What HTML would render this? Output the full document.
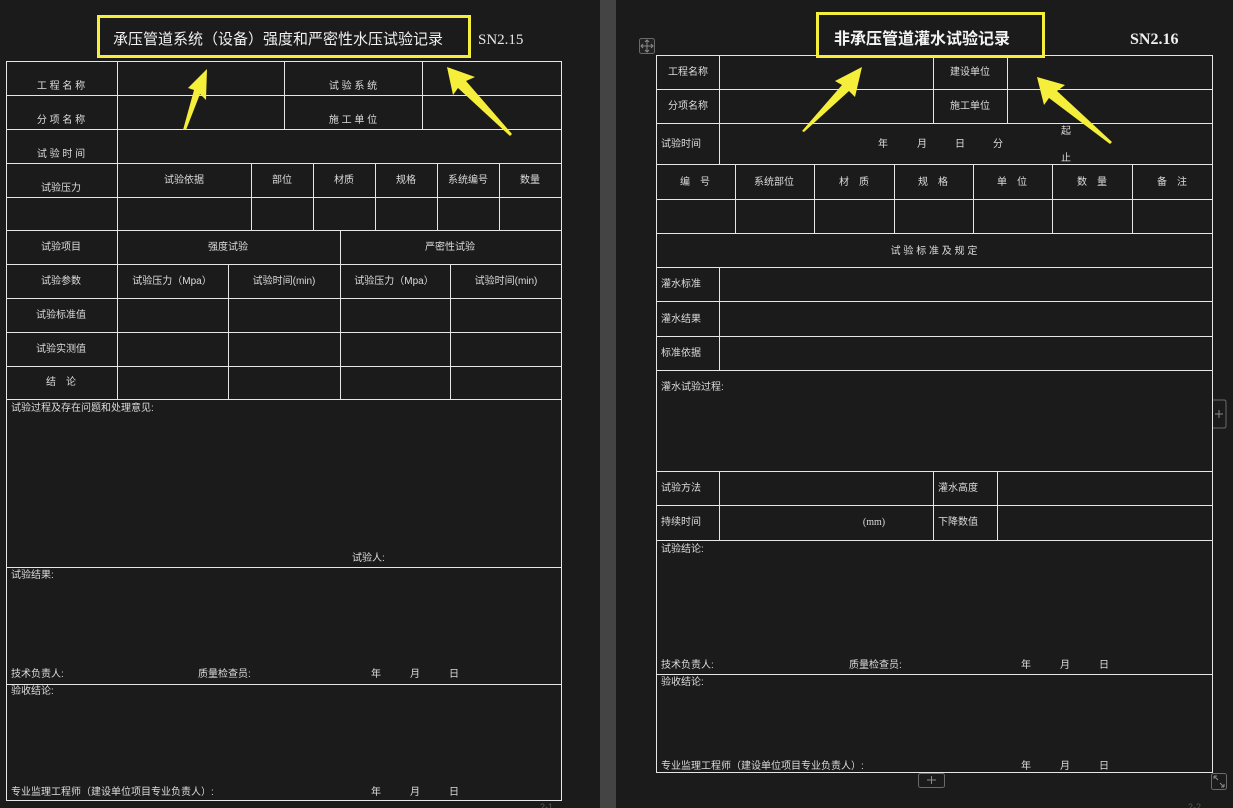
<!DOCTYPE html>
<html><head><meta charset="utf-8"><style>
html,body{margin:0;padding:0;background:#1b1b1b;width:1233px;height:808px;overflow:hidden}
svg{display:block}
text{font-family:"Liberation Sans","Noto Sans CJK SC",sans-serif;font-size:10px;fill:#dcdcdc}
.c{text-anchor:middle}
.ser{font-family:"Liberation Serif","Noto Serif CJK SC",serif}
</style></head><body>
<svg width="1233" height="808" viewBox="0 0 1233 808" xmlns="http://www.w3.org/2000/svg">
<rect x="600" y="0" width="16" height="808" fill="#444"/>
<g stroke="#e6e6e6" stroke-width="1" fill="none" shape-rendering="crispEdges">
<path d="M6 61.5H561M6 95.5H561M6 129.5H561M6 163.5H561M6 197.5H561M6 230.5H561M6 264.5H561M6 298.5H561M6 332.5H561M6 366.5H561M6 399.5H561M6 567.5H561M6 684.5H561M6 800.5H561"/>
<path d="M6.5 61V801M561.5 61V801M117.5 61V399M284.5 61V129M422.5 61V129M251.5 163V230M313.5 163V230M375.5 163V230M437.5 163V230M499.5 163V230M340.5 230V399M228.5 264V399M450.5 264V399"/>
<path d="M656 55.5H1212M656 89.5H1212M656 123.5H1212M656 164.5H1212M656 199.5H1212M656 233.5H1212M656 267.5H1212M656 301.5H1212M656 336.5H1212M656 370.5H1212M656 471.5H1212M656 505.5H1212M656 540.5H1212M656 674.5H1212M656 772.5H1212"/>
<path d="M656.5 55V773M1212.5 55V773M719.5 55V164M933.5 55V123M1007.5 55V123M735.5 164V233M814.5 164V233M894.5 164V233M973.5 164V233M1052.5 164V233M1132.5 164V233M719.5 267V370M719.5 471V540M933.5 471V540M997.5 471V540"/>
</g>
<rect x="98.5" y="16.5" width="371" height="40" fill="none" stroke="#f5ee3a" stroke-width="3"/>
<rect x="817.5" y="13.5" width="226" height="43" fill="none" stroke="#f5ee3a" stroke-width="3"/>
<text x="113" y="44" style="font-size:15px;fill:#f0f0f0">承压管道系统（设备）强度和严密性水压试验记录</text>
<text x="478" y="44" class="ser" style="font-size:15px;fill:#e8e8e8">SN2.15</text>
<text x="834" y="44" style="font-size:16px;font-weight:bold;fill:#f4f4f4">非承压管道灌水试验记录</text>
<text x="1130" y="44" class="ser" style="font-size:16px;font-weight:bold;fill:#f0f0f0">SN2.16</text>
<g fill="#f5ee3a">
<polygon points="207,69 206,100 200,94 186,130 183,130 194,90 188,88"/>
<polygon points="447,67 475,77 466,81 512,134 510,136 458,88 453,95"/>
<polygon points="862,67 855,97 849,91 804,132 802,131 842,85 835,81"/>
<polygon points="1037,77 1065,85 1057,91 1112,142 1110,144 1049,98 1044,105"/>
</g>
<g>
<text x="61" y="89" class="c">工 程 名 称</text>
<text x="353" y="89" class="c">试 验 系 统</text>
<text x="61" y="123" class="c">分 项 名 称</text>
<text x="353" y="123" class="c">施 工 单 位</text>
<text x="61" y="157" class="c">试 验 时 间</text>
<text x="61" y="191" class="c">试验压力</text>
<text x="184" y="183" class="c">试验依据</text>
<text x="282" y="183" class="c">部位</text>
<text x="344" y="183" class="c">材质</text>
<text x="406" y="183" class="c">规格</text>
<text x="468" y="183" class="c">系统编号</text>
<text x="530" y="183" class="c">数量</text>
<text x="61" y="250" class="c">试验项目</text>
<text x="228" y="250" class="c">强度试验</text>
<text x="450" y="250" class="c">严密性试验</text>
<text x="61" y="284" class="c">试验参数</text>
<text x="172" y="284" class="c">试验压力（Mpa）</text>
<text x="284" y="284" class="c">试验时间(min)</text>
<text x="394" y="284" class="c">试验压力（Mpa）</text>
<text x="506" y="284" class="c">试验时间(min)</text>
<text x="61" y="318" class="c">试验标准值</text>
<text x="61" y="352" class="c">试验实测值</text>
<text x="61" y="385" class="c">结　论</text>
<text x="11" y="411">试验过程及存在问题和处理意见:</text>
<text x="352" y="561">试验人:</text>
<text x="11" y="578">试验结果:</text>
<text x="11" y="677">技术负责人:</text>
<text x="198" y="677">质量检查员:</text>
<text x="371" y="677">年</text><text x="410" y="677">月</text><text x="449" y="677">日</text>
<text x="11" y="694">验收结论:</text>
<text x="11" y="795">专业监理工程师（建设单位项目专业负责人）:</text>
<text x="371" y="795">年</text><text x="410" y="795">月</text><text x="449" y="795">日</text>
</g>
<g>
<text x="688" y="75" class="c">工程名称</text>
<text x="970" y="75" class="c">建设单位</text>
<text x="688" y="109" class="c">分项名称</text>
<text x="970" y="109" class="c">施工单位</text>
<text x="661" y="147">试验时间</text>
<text x="883" y="147" class="c">年</text><text x="922" y="147" class="c">月</text><text x="960" y="147" class="c">日</text><text x="998" y="147" class="c">分</text>
<text x="1066" y="134" class="c">起</text><text x="1066" y="161" class="c">止</text>
<text x="695" y="185" class="c">编　号</text>
<text x="774" y="185" class="c">系统部位</text>
<text x="854" y="185" class="c">材　质</text>
<text x="933" y="185" class="c">规　格</text>
<text x="1012" y="185" class="c">单　位</text>
<text x="1092" y="185" class="c">数　量</text>
<text x="1172" y="185" class="c">备　注</text>
<text x="934" y="254" class="c">试 验 标 准  及 规 定</text>
<text x="661" y="287">灌水标准</text>
<text x="661" y="322">灌水结果</text>
<text x="661" y="356">标准依据</text>
<text x="661" y="390">灌水试验过程:</text>
<text x="661" y="491">试验方法</text>
<text x="938" y="491">灌水高度</text>
<text x="661" y="525">持续时间</text>
<text x="874" y="525" class="c ser">(mm)</text>
<text x="938" y="525">下降数值</text>
<text x="661" y="552">试验结论:</text>
<text x="661" y="668">技术负责人:</text>
<text x="849" y="668">质量检查员:</text>
<text x="1021" y="668">年</text><text x="1060" y="668">月</text><text x="1099" y="668">日</text>
<text x="661" y="685">验收结论:</text>
<text x="661" y="769">专业监理工程师（建设单位项目专业负责人）:</text>
<text x="1021" y="769">年</text><text x="1060" y="769">月</text><text x="1099" y="769">日</text>
</g>
<g fill="none" stroke="#6a6a6a" stroke-width="1">
<rect x="639.5" y="38.5" width="15" height="15" rx="2" fill="#222"/>
<path d="M647 40V52M641 46H653M645 42L647 40L649 42M645 50L647 52L649 50M643 44L641 46L643 48M651 44L653 46L651 48" stroke="#8a8a8a"/>
<path d="M1213 400H1224Q1226 400 1226 402V426Q1226 428 1224 428H1213"/>
<path d="M1215 414H1223M1219 410V418" stroke="#8a8a8a"/>
<rect x="918.5" y="773.5" width="26" height="14" rx="2"/>
<path d="M927 780H936M931.5 776V784" stroke="#8a8a8a"/>
<rect x="1211.5" y="773.5" width="15" height="16" rx="2"/>
<path d="M1214 776L1218 780M1214 776H1217M1214 776V779M1224 787L1220 783M1224 787H1221M1224 787V784" stroke="#8a8a8a"/>
</g>
<text x="540" y="810" style="fill:#555;font-size:9px">2-1</text>
<text x="1188" y="810" style="fill:#555;font-size:9px">2-2</text>
</svg>
</body></html>
